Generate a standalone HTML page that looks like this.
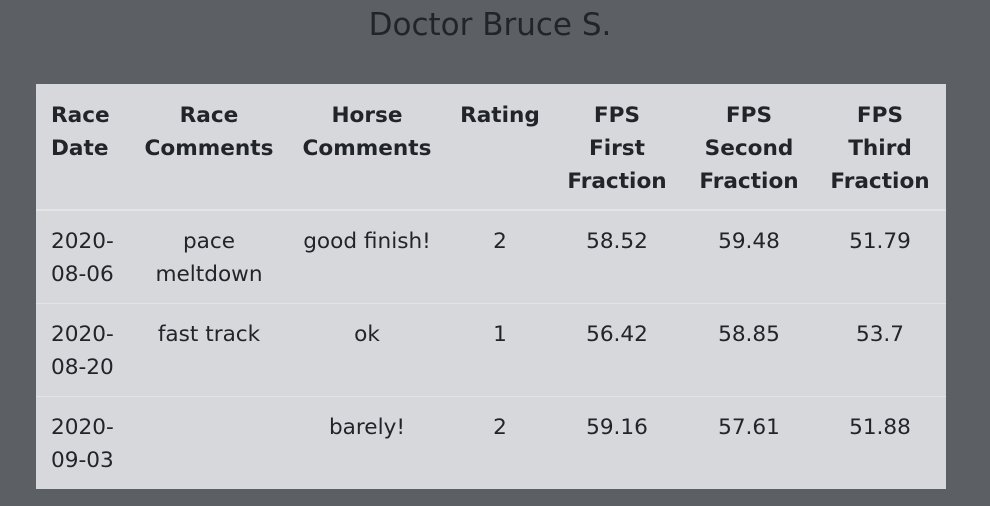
<!DOCTYPE html>
<html><head><meta charset="utf-8"><style>
html,body{margin:0;padding:0;}
body{width:990px;height:506px;background:#5c5f64;font-family:"DejaVu Sans","Liberation Sans",sans-serif;color:#212529;overflow:hidden;position:relative;}
h1{position:absolute;top:5px;left:-5px;width:990px;margin:0;text-align:center;font-weight:normal;font-size:31px;line-height:40px;color:#212529;}
table{position:absolute;left:36px;top:84px;width:910px;border-collapse:collapse;table-layout:fixed;background:#d6d8db;font-size:21.6px;line-height:33px;}
th,td{padding:0 4px;vertical-align:top;text-align:center;}
th{font-weight:bold;height:126px;padding-top:15px;box-sizing:border-box;border-bottom:2px solid #e2e4e6;}
td{height:93px;padding-top:14px;box-sizing:border-box;border-top:1px solid #e2e4e6;}
tr:first-child td{border-top:none;}
th:first-child,td:first-child{text-align:left;padding-left:15px;}
</style></head><body>
<h1>Doctor Bruce S.</h1>
<table>
<colgroup><col style="width:98px"><col style="width:150px"><col style="width:166px"><col style="width:100px"><col style="width:134px"><col style="width:130px"><col style="width:132px"></colgroup>
<thead><tr><th>Race<br>Date</th><th>Race<br>Comments</th><th>Horse<br>Comments</th><th>Rating</th><th>FPS<br>First<br>Fraction</th><th>FPS<br>Second<br>Fraction</th><th>FPS<br>Third<br>Fraction</th></tr></thead>
<tbody>
<tr><td>2020-<br>08-06</td><td>pace<br>meltdown</td><td>good finish!</td><td>2</td><td>58.52</td><td>59.48</td><td>51.79</td></tr>
<tr><td>2020-<br>08-20</td><td>fast track</td><td>ok</td><td>1</td><td>56.42</td><td>58.85</td><td>53.7</td></tr>
<tr><td>2020-<br>09-03</td><td></td><td>barely!</td><td>2</td><td>59.16</td><td>57.61</td><td>51.88</td></tr>
</tbody></table>
</body></html>
